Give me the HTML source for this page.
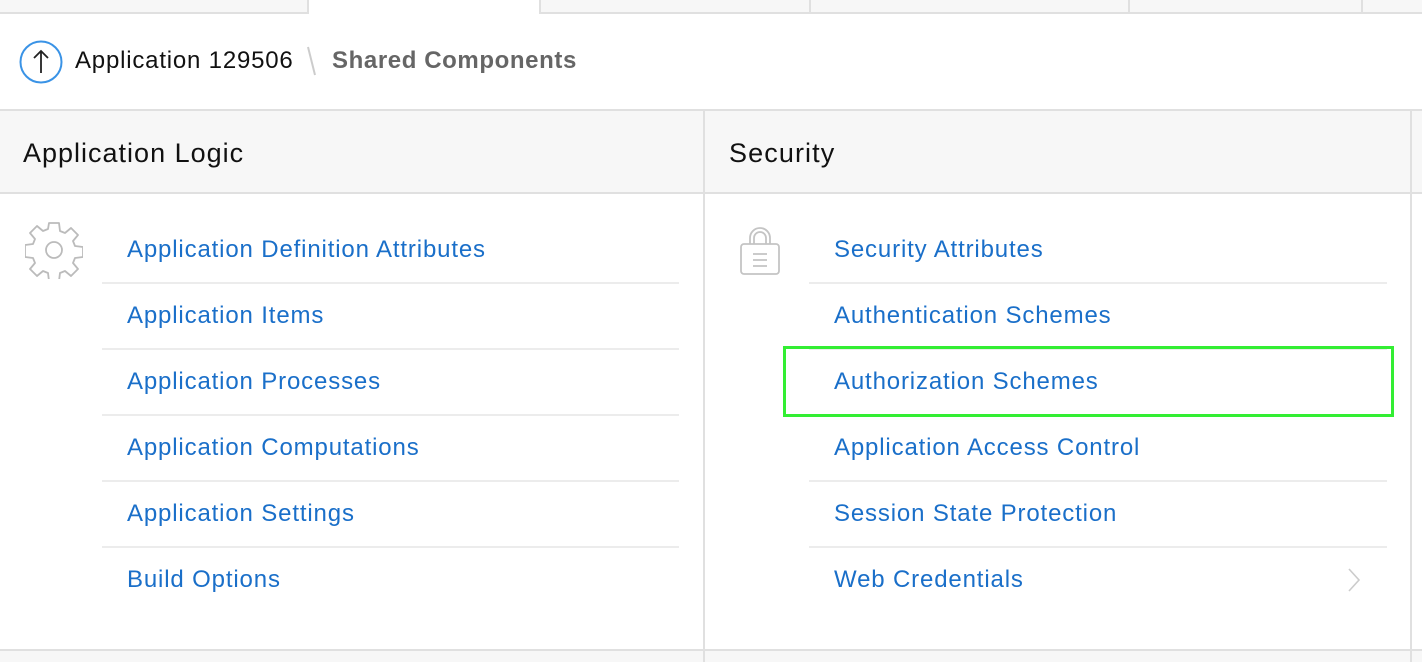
<!DOCTYPE html>
<html><head><meta charset="utf-8"><style>
*{margin:0;padding:0;box-sizing:border-box}
body{width:1422px;height:662px;overflow:hidden;background:#fff;font-family:"Liberation Sans",sans-serif;position:relative}
.a{position:absolute}
.tabs{left:0;top:0;width:1422px;height:14px;background:#f7f7f7;border-bottom:2px solid #e0e0e0}
.tab{top:0;height:14px;border-left:2px solid #e0e0e0}
.lnk{position:absolute;color:#1a6fc9;font-size:24px;line-height:30px;letter-spacing:0.85px;white-space:nowrap}
.sep{position:absolute;height:2px;background:#ececec}
</style></head><body>
<div class="a tabs"></div>
<div class="a" style="left:307px;top:0;width:234px;height:14px;background:#fff;border-left:2px solid #e0e0e0;border-right:2px solid #e0e0e0"></div>
<div class="a tab" style="left:809px"></div>
<div class="a tab" style="left:1128px"></div>
<div class="a tab" style="left:1361px"></div>

<svg class="a" style="left:19px;top:40px" width="46" height="44"><circle cx="22" cy="22" r="20.5" fill="none" stroke="#3a93e6" stroke-width="2"/><path d="M22 33V11M15 18l7-7 7 7" fill="none" stroke="#222" stroke-width="1.8"/></svg>
<div class="a" style="left:75px;top:46px;font-size:24px;color:#111;line-height:30px;letter-spacing:0.8px">Application 129506</div>
<svg class="a" style="left:305px;top:44px" width="14" height="34"><path d="M3 3l7 28" stroke="#ccc" stroke-width="2"/></svg>
<div class="a" style="left:332px;top:46px;font-size:24px;color:#666;font-weight:bold;line-height:30px;letter-spacing:0.6px">Shared Components</div>

<div class="a" style="left:0;top:109px;width:1422px;height:85px;background:#f7f7f7;border-top:2px solid #e0e0e0;border-bottom:2px solid #e0e0e0"></div>
<div class="a" style="left:703px;top:111px;width:2px;height:551px;background:#e0e0e0"></div>
<div class="a" style="left:1410px;top:111px;width:2px;height:551px;background:#e0e0e0"></div>
<div class="a" style="left:23px;top:136px;font-size:27px;color:#111;line-height:34px;letter-spacing:1px">Application Logic</div>
<div class="a" style="left:729px;top:136px;font-size:27px;color:#111;line-height:34px;letter-spacing:1.1px">Security</div>
<div class="a" style="left:0;top:649px;width:1422px;height:13px;background:#f7f7f7;border-top:2px solid #e0e0e0"></div>
<div class="a" style="left:703px;top:651px;width:2px;height:11px;background:#e0e0e0"></div>
<div class="a" style="left:1410px;top:651px;width:2px;height:11px;background:#e0e0e0"></div>

<svg class="a" style="left:25px;top:221px" width="58" height="58" viewBox="0 0 58 58"><path d="M24 2h10l1 8 5 2 6-5 7 7-5 6 2 5 8 1v10l-8 1-2 5 5 6-7 7-6-5-5 2-1 8H24l-1-8-5-2-6 5-7-7 5-6-2-5-8-1V24l8-1 2-5-5-6 7-7 6 5 5-2z" fill="none" stroke="#bbb" stroke-width="1.8" stroke-linejoin="round"/><circle cx="29" cy="29" r="8" fill="none" stroke="#bbb" stroke-width="1.8"/></svg>
<svg class="a" style="left:739px;top:225px" width="46" height="52"><path d="M11 19V13a10 10 0 0 1 20 0v6M15 19V13a6 6 0 0 1 12 0v6" fill="none" stroke="#c4c4c4" stroke-width="1.8"/><rect x="2" y="19" width="38" height="30" rx="3" fill="none" stroke="#c4c4c4" stroke-width="1.8"/><path d="M14 29h14M14 35h14M14 41h14" stroke="#c4c4c4" stroke-width="1.8"/></svg>

<div class="lnk" style="left:127px;top:235px">Application Definition Attributes</div>
<div class="lnk" style="left:127px;top:301px">Application Items</div>
<div class="lnk" style="left:127px;top:367px">Application Processes</div>
<div class="lnk" style="left:127px;top:433px">Application Computations</div>
<div class="lnk" style="left:127px;top:499px">Application Settings</div>
<div class="lnk" style="left:127px;top:565px">Build Options</div>
<div class="sep" style="left:102px;top:282px;width:577px"></div>
<div class="sep" style="left:102px;top:348px;width:577px"></div>
<div class="sep" style="left:102px;top:414px;width:577px"></div>
<div class="sep" style="left:102px;top:480px;width:577px"></div>
<div class="sep" style="left:102px;top:546px;width:577px"></div>

<div class="lnk" style="left:834px;top:235px">Security Attributes</div>
<div class="lnk" style="left:834px;top:301px">Authentication Schemes</div>
<div class="lnk" style="left:834px;top:367px">Authorization Schemes</div>
<div class="lnk" style="left:834px;top:433px">Application Access Control</div>
<div class="lnk" style="left:834px;top:499px">Session State Protection</div>
<div class="lnk" style="left:834px;top:565px">Web Credentials</div>
<div class="sep" style="left:809px;top:282px;width:578px"></div>
<div class="sep" style="left:809px;top:348px;width:578px"></div>
<div class="sep" style="left:809px;top:414px;width:578px"></div>
<div class="sep" style="left:809px;top:480px;width:578px"></div>
<div class="sep" style="left:809px;top:546px;width:578px"></div>
<svg class="a" style="left:1346px;top:567px" width="16" height="26"><path d="M3 2l10 11-10 11" fill="none" stroke="#ccc" stroke-width="1.6"/></svg>

<div class="a" style="left:783px;top:346px;width:611px;height:71px;border:3px solid #33ee33"></div>
</body></html>
